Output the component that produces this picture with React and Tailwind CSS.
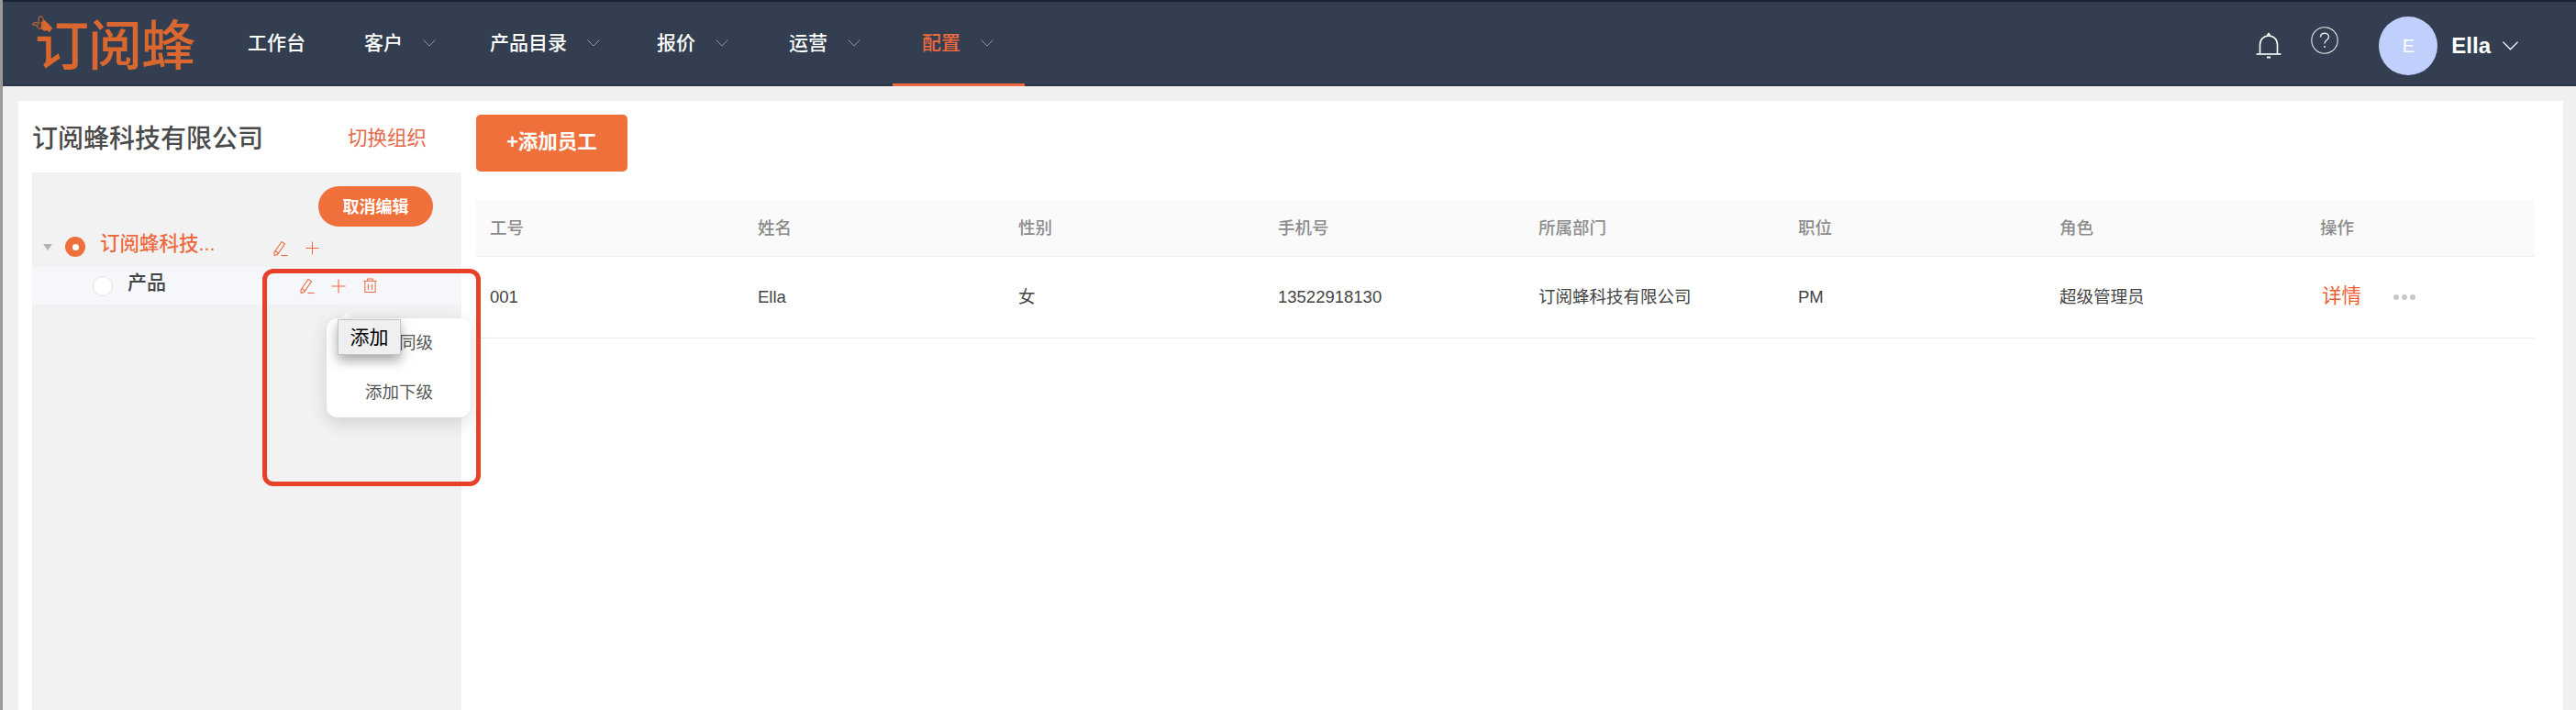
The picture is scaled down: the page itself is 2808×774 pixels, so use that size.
import React from "react";

const Chevron = ({ className = "" }) => (
  <svg viewBox="0 0 14 8" className={className} fill="none" stroke="currentColor" strokeWidth="1">
    <path d="M0.5 0.5 L7 7 L13.5 0.5" />
  </svg>
);

const Pencil = ({ className = "" }) => (
  <svg viewBox="0 0 16 18" className={className} fill="none" stroke="currentColor" strokeWidth="1.1">
    <path d="M1 13 L9 1.5 L12.5 3.8 L4.5 15.5 L1.2 16.6 Z" />
    <path d="M2 11.5 L5.5 14" />
    <path d="M8.5 16.5 H15.5" />
  </svg>
);

const Plus = ({ className = "" }) => (
  <svg viewBox="0 0 16 16" className={className} fill="none" stroke="currentColor" strokeWidth="1.1">
    <path d="M8 0.5 V15.5 M0.5 8 H15.5" />
  </svg>
);

const Trash = ({ className = "" }) => (
  <svg viewBox="0 0 16 18" className={className} fill="none" stroke="currentColor" strokeWidth="1.1">
    <path d="M0.5 3.5 H15.5" />
    <path d="M5 3.5 V1 H11 V3.5" />
    <path d="M2 3.5 V16.5 H14 V3.5" />
    <path d="M5.8 7 V13.5 M10.2 7 V13.5" />
  </svg>
);

const Bell = ({ className = "" }) => (
  <svg viewBox="0 0 28 30" className={className} fill="none" stroke="currentColor" strokeWidth="1.6">
    <path d="M0.5 24 H27.5" />
    <path d="M4.5 24 V14 C4.5 8 8.5 4 14 4 C19.5 4 23.5 8 23.5 14 V24" />
    <path d="M12.5 3.5 L14 1.5 L15.5 3.5" />
    <path d="M12 27.5 H16" strokeWidth="2" />
  </svg>
);

const Help = ({ className = "" }) => (
  <svg viewBox="0 0 30 30" className={className} fill="none" stroke="currentColor" strokeWidth="1.1">
    <circle cx="15" cy="15" r="14.2" />
    <path d="M10.5 11.5 C10.5 8.8 12.5 7.2 15 7.2 C17.5 7.2 19.5 8.9 19.5 11.2 C19.5 14.5 15 14.5 15 18.5" strokeWidth="1.4" />
    <circle cx="15" cy="22" r="1" fill="currentColor" stroke="none" />
  </svg>
);

const Bee = ({ className = "" }) => (
  <svg viewBox="0 0 20 18" className={className} fill="none" stroke="#c9652f" strokeWidth="1.1">
    <path d="M8 9 C6 6 7 1 9 0.8 C12 1 13 5 12 8" />
    <path d="M8 9 C5 7 2 7 0.5 9.5 C3 10.5 5 10.5 7 10" />
    <path d="M5 11 C6 14 9 15 11 14" />
    <ellipse cx="14" cy="12.5" rx="4.5" ry="4" fill="#d9672f" stroke="none" transform="rotate(30 14 12.5)" />
  </svg>
);

const nav = [
  { label: "工作台", w: "w-[127px]" },
  { label: "客户", w: "w-[137px]", arrow: true },
  { label: "产品目录", w: "w-[182px]", arrow: true },
  { label: "报价", w: "w-[144px]", arrow: true },
  { label: "运营", w: "w-[145px]", arrow: true },
  { label: "配置", w: "w-[144px]", arrow: true, active: true },
];

const headers = ["工号", "姓名", "性别", "手机号", "所属部门", "职位", "角色", "操作"];
const cols = ["001", "Ella", "女", "13522918130", "订阅蜂科技有限公司", "PM", "超级管理员"];
const gridCols = "grid grid-cols-[292px_284px_283px_284px_283px_285px_284px_1fr] pl-[15px]";

export default function App() {
  return (
    <div
      className="w-[2808px] h-[774px] overflow-hidden flex flex-col bg-[#f0f0f0] border-l-[3px] border-[#9a9a9a] text-[#333333]"
      style={{ fontFamily: '"Liberation Sans", "Noto Sans CJK SC", sans-serif' }}
    >
      <header className="h-[94px] shrink-0 flex items-stretch bg-[#333f50] border-t-2 border-t-[#1b2238] border-b-2 border-b-[#2a3546]">
        <div className="w-[235px] shrink-0 relative flex items-center pl-[35px]">
          <Bee className="absolute left-[32px] top-[15px] w-[20px] h-[18px]" />
          <span className="text-[59px] leading-none font-medium text-[#d9672f] tracking-[-1px] mt-[8px]">订阅蜂</span>
        </div>
        {nav.map((n) => (
          <div
            key={n.label}
            className={`${n.w} shrink-0 flex items-center pl-[32px] gap-[22px] border-b-[3px] -mb-[2px] ${
              n.active ? "border-[#ee6a3e] text-[#ee6a3e]" : "border-transparent text-white"
            }`}
          >
            <span className="text-[21px] leading-none font-medium">{n.label}</span>
            {n.arrow && <Chevron className="w-[14px] h-[8px] text-[#8b95a3]" />}
          </div>
        ))}
        <div className="flex-1" />
        <div className="flex items-center text-white pr-[62px] pt-[6px]">
          <Bell className="w-[28px] h-[30px] mr-[2px]" />
          <Help className="w-[30px] h-[30px] ml-[30px] -mt-[13px] text-[#e6e8eb]" />
          <div className="w-[64px] h-[64px] ml-[44px] rounded-full bg-[#c0cffb] flex items-center justify-center text-[20px]">E</div>
          <span className="ml-[15px] text-[24px] font-bold">Ella</span>
          <Chevron className="ml-[12px] w-[19px] h-[10px]" />
        </div>
      </header>

      <main className="flex-1 min-h-0 pt-[16px] pl-[17px] pr-[14px]">
        <div className="h-full bg-white flex pl-[15px] pr-[31px] gap-[16px] relative">
          <section className="w-[468px] shrink-0 flex flex-col">
            <div className="h-[78px] shrink-0 flex items-center justify-between pr-[38px] pt-[5px]">
              <span className="text-[28px] leading-none font-medium text-[#4a4a4a]">订阅蜂科技有限公司</span>
              <span className="text-[21.5px] leading-none text-[#e8694a]">切换组织</span>
            </div>
            <div className="flex-1 bg-[#f2f2f2] relative">
              <div className="flex justify-end pt-[15px] pr-[31px]">
                <button className="w-[125px] h-[44px] rounded-full bg-[#f0703c] text-white text-[18px] font-bold leading-none pt-[2px]">取消编辑</button>
              </div>
              <div className="h-[44px] flex items-center pl-[12px] relative">
                <span className="w-0 h-0 border-x-[5.5px] border-x-transparent border-t-[7px] border-t-[#b5b5b5]" />
                <span className="ml-[14px] w-[22px] h-[22px] rounded-full bg-[#f0703c] flex items-center justify-center">
                  <span className="w-[7px] h-[7px] rounded-full bg-white" />
                </span>
                <span className="ml-[16px] w-[189px] text-[21.5px] leading-none font-medium text-[#ee6a40] -mt-[4px]">订阅蜂科技...</span>
                <Pencil className="w-[16px] h-[18px] text-[#ee6a40] mt-[3px]" />
                <Plus className="ml-[19px] w-[15px] h-[15px] text-[#ee6a40] mt-[3px]" />
              </div>
              <div className="h-[41px] flex items-center bg-[#f5f7fa] pl-[66px]">
                <span className="w-[22px] h-[22px] rounded-full bg-white border border-[#e4e6ea]" />
                <span className="ml-[16px] w-[188px] text-[21px] leading-none font-medium text-[#444444] -mt-[8px]">产品</span>
                <Pencil className="w-[16px] h-[18px] text-[#ee6a40]" />
                <Plus className="ml-[18px] w-[16px] h-[16px] text-[#ee6a40]" />
                <Trash className="ml-[19px] w-[15px] h-[17px] text-[#ee6a40]" />
              </div>

              <div className="absolute left-[321px] top-[159px] w-[157px] h-[108px] bg-white rounded-[12px] shadow-[0_6px_20px_rgba(0,0,0,0.14)] z-10 flex flex-col items-end pr-[41px] pt-[18px] gap-[35px] text-[18.5px] leading-none text-[#555555]">
                <span className="absolute left-[16px] -top-[4px] w-[12px] h-[12px] rotate-45 bg-[#f7f7f7]" />
                <span className="relative">同级</span>
                <span>添加下级</span>
              </div>
              <div className="absolute left-[333px] top-[160px] w-[69px] h-[39px] bg-[#efefef] border border-[#c4c4c4] shadow-[0_6px_12px_rgba(0,0,0,0.35)] z-20 flex items-center justify-center text-[21px] leading-none text-black">
                添加
              </div>
              <div className="absolute left-[251px] top-[105px] w-[238px] h-[237px] border-[5px] border-[#e8412a] rounded-[12px] z-30" />
            </div>
          </section>

          <section className="flex-1 min-w-0 pt-[15px]">
            <button className="w-[165px] h-[62px] rounded-[5px] bg-[#f0703c] text-white text-[21.5px] leading-none font-bold">+添加员工</button>
            <div className={`${gridCols} mt-[31px] h-[62px] items-center bg-[#fafafa] border-b border-[#eeeeee] text-[18.5px] font-medium text-[#8c8c8c]`}>
              {headers.map((h) => (
                <span key={h}>{h}</span>
              ))}
            </div>
            <div className={`${gridCols} h-[89px] items-center border-b border-[#eeeeee] text-[18.5px] text-[#444444]`}>
              {cols.map((c) => (
                <span key={c}>{c}</span>
              ))}
              <div className="flex items-center">
                <span className="text-[21.5px] leading-none text-[#ee5f36] ml-[2px]">详情</span>
                <span className="ml-[35px] flex gap-[3px]">
                  <span className="w-[6px] h-[6px] rounded-full bg-[#c8c8c8]" />
                  <span className="w-[6px] h-[6px] rounded-full bg-[#c8c8c8]" />
                  <span className="w-[6px] h-[6px] rounded-full bg-[#c8c8c8]" />
                </span>
              </div>
            </div>
          </section>
        </div>
      </main>
    </div>
  );
}
